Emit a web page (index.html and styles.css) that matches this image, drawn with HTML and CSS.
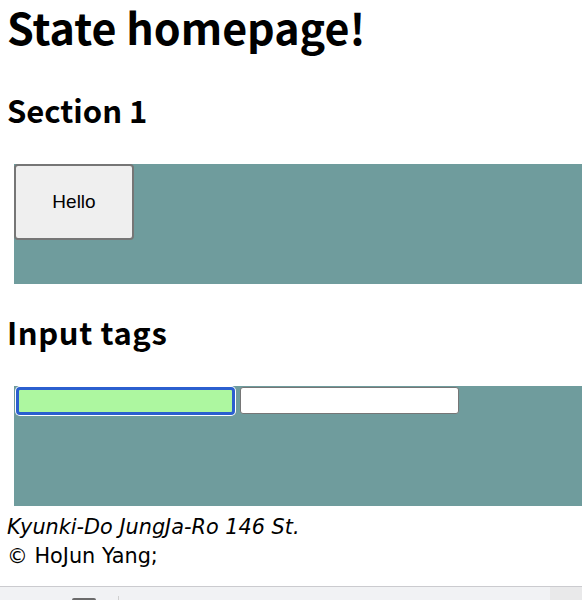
FILE: index.html
```html
<!DOCTYPE html>
<html lang="en">
<head>
<meta charset="utf-8">
<title>State homepage!</title>
<link rel="stylesheet" href="styles.css">
</head>
<body>
<h1 class="title">State homepage!</h1>
<h2 class="section-title">Section 1</h2>
<div class="panel">
  <button class="hello-btn" type="button">Hello</button>
</div>
<h2 class="section-title">Input tags</h2>
<div class="panel panel-inputs">
  <input class="field field-focused" type="text">
  <input class="field" type="text">
</div>
<footer class="footer">
  <address class="addr">Kyunki-Do JungJa-Ro 146 St.</address>
  <p class="copy">© HoJun Yang;</p>
</footer>
<div class="devbar">
  <span class="devbar-icon"></span>
  <span class="devbar-sep"></span>
  <span class="devbar-side"></span>
</div>
</body>
</html>
```
FILE: styles.css
```css
html, body {
  margin: 0;
  padding: 0;
  background: #ffffff;
}
body {
  padding-left: 7px;
  font-family: "Noto Sans CJK KR", "Noto Sans", sans-serif;
  color: #000;
  min-height: 600px;
}
.title {
  margin: -5px 0 33px 0;
  font-size: 43px;
  line-height: normal;
  font-weight: 700;
}
.section-title {
  margin: 0;
  font-size: 31px;
  line-height: 40px;
  font-weight: 700;
}
.panel {
  margin: 34px -7px 0 7px;
  height: 120px;
  background: #6f9c9d;
}
.section-title + .panel { margin-top: 34px; }
.panel + .section-title { margin-top: 28px; letter-spacing: 0.6px; }
.hello-btn {
  display: block;
  width: 120px;
  height: 76px;
  margin: 0;
  padding: 0;
  background: #efefef;
  border: 2px solid #767676;
  border-radius: 4px;
  font-family: "Liberation Sans", Arial, sans-serif;
  font-size: 19px;
  color: #000;
}
.panel-inputs {
  display: flex;
  align-items: flex-start;
  gap: 5px;
  padding: 1px 0 0 2px;
  box-sizing: border-box;
}
.field {
  width: 219px;
  height: 27px;
  margin: 0;
  padding: 0;
  box-sizing: border-box;
  background: #fff;
  border: 1px solid #767676;
  border-radius: 3px;
}
.field-focused {
  background: #adf7a0;
  border: 3px solid #2b5fcf;
  border-radius: 4px;
  box-shadow: 0 0 0 1px #ffffff;
  height: 28px;
}
.footer {
  margin-top: 7px;
  font-family: "DejaVu Sans", "Noto Sans", sans-serif;
  font-size: 20.8px;
  line-height: 29px;
}
.addr {
  font-style: italic;
  margin: 0;
}
.copy {
  margin: 0;
}
.devbar {
  position: fixed;
  left: 0;
  right: 0;
  top: 586px;
  height: 14px;
  background: #f1f2f4;
  border-top: 1px solid #cbcbcf;
}
.devbar-icon {
  position: absolute;
  left: 72px;
  top: 11px;
  width: 24px;
  height: 6px;
  background: #6b6b6b;
  border-radius: 2px;
}
.devbar-sep {
  position: absolute;
  left: 118px;
  top: 9px;
  width: 1px;
  height: 8px;
  background: #cfcfcf;
}
.devbar-side {
  position: absolute;
  right: 0;
  top: 0;
  width: 32px;
  height: 14px;
  background: #e9e9ea;
}
```
